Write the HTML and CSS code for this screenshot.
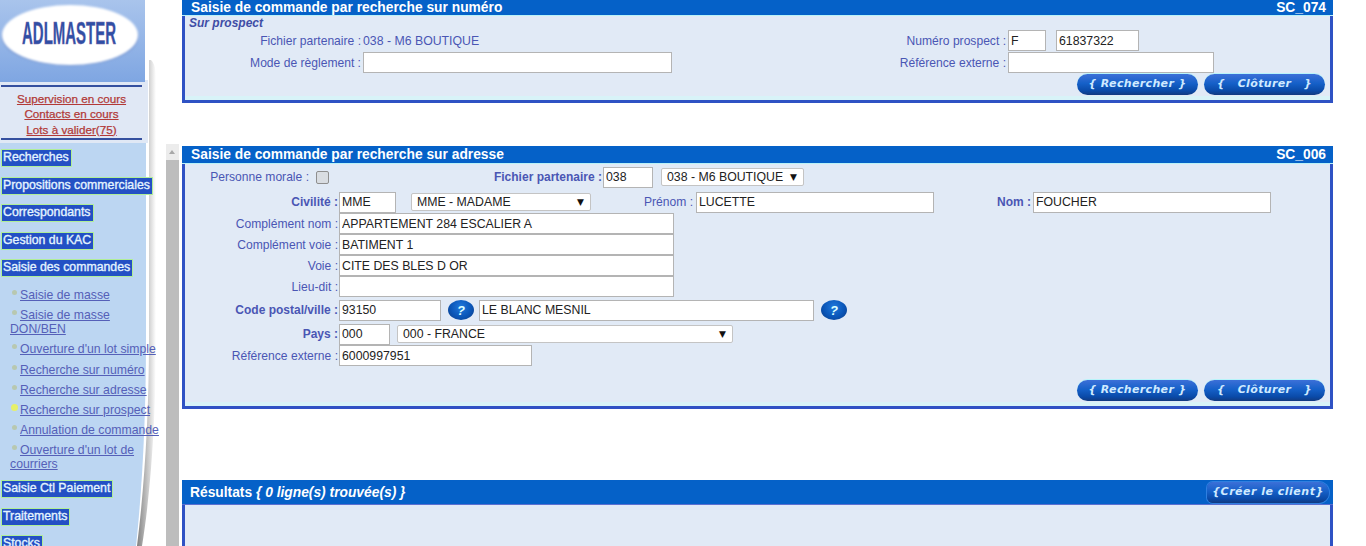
FILE: index.html
```html
<!DOCTYPE html>
<html lang="fr">
<head>
<meta charset="utf-8">
<title>ADLMASTER</title>
<link rel="stylesheet" href="styles.css">
</head>
<body>
<div class="app">
  <aside class="sidebar">
    <svg class="sidebar-art" width="166" height="546" viewBox="0 0 166 546">
      <defs>
        <linearGradient id="top" x1="0" y1="0" x2="0" y2="1"><stop offset="0" stop-color="#a9c4ec"/><stop offset="1" stop-color="#7fa6e2"/></linearGradient>
        <linearGradient id="shade" x1="0" y1="0" x2="1" y2="0"><stop offset="0" stop-color="#808080"/><stop offset="1" stop-color="#ffffff"/></linearGradient>
        <filter id="soft"><feGaussianBlur stdDeviation="1.2"/></filter>
      </defs>
      <path d="M0 143H146V340C146 420 142 490 136 546H0Z" fill="#bcd6f2"/>
      <path d="M0 80H148V143H0Z" fill="#e0e8f5"/>
      <path d="M149 60H151C155 64 156 70 156 80V330C156 420 151 490 142 546H137C144 490 149 420 149 340Z" fill="url(#shade)"/>
      <path d="M0 0H145V82H0Z" fill="url(#top)"/>
      <ellipse cx="70" cy="38" rx="68" ry="28" fill="#7f9fd8" filter="url(#soft)"/>
      <ellipse cx="70" cy="35" rx="68" ry="30" fill="#ffffff" filter="url(#soft)"/>
      <text x="69" y="44" text-anchor="middle" textLength="94" lengthAdjust="spacingAndGlyphs" class="logo-text">ADLMASTER</text>
    </svg>
    <div class="logo-space"></div>
    <div class="quick">
      <a href="#">Supervision en cours</a>
      <a href="#">Contacts en cours</a>
      <a href="#">Lots à valider(75)</a>
    </div>
    <nav class="menu">
      <a class="head" href="#">Recherches</a>
      <a class="head" href="#">Propositions commerciales</a>
      <a class="head" href="#">Correspondants</a>
      <a class="head" href="#">Gestion du KAC</a>
      <a class="head" href="#">Saisie des commandes</a>
      <ul class="sub">
        <li><a href="#">Saisie de masse</a></li>
        <li><a href="#">Saisie de masse DON/BEN</a></li>
        <li><a href="#">Ouverture d'un lot simple</a></li>
        <li><a href="#">Recherche sur numéro</a></li>
        <li><a href="#">Recherche sur adresse</a></li>
        <li class="current"><a href="#">Recherche sur prospect</a></li>
        <li><a href="#">Annulation de commande</a></li>
        <li><a href="#">Ouverture d'un lot de courriers</a></li>
      </ul>
      <a class="head" href="#">Saisie Ctl Paiement</a>
      <a class="head" href="#">Traitements</a>
      <a class="head" href="#">Stocks</a>
    </nav>
  </aside>
  <div class="scrollbar"><span class="scroll-up"></span><span class="scroll-thumb"></span></div>
  <main class="main">
    <section class="panel panel-one">
      <header class="panel-head"><span>Saisie de commande par recherche sur numéro</span><span>SC_074</span></header>
      <div class="panel-body">
        <div class="subtitle">Sur prospect</div>
        <div class="line-one">
          <label class="lab">Fichier partenaire :</label><span class="value">038 - M6 BOUTIQUE</span>
          <label class="lab">Numéro prospect :</label>
          <span class="pair"><input class="w38" value="F"><input class="w83 gap10" value="61837322"></span>
        </div>
        <div class="line-one line-two">
          <label class="lab">Mode de règlement :</label><input class="w309">
          <label class="lab">Référence externe :</label><input class="w206">
        </div>
        <div class="actions actions-one">
          <button class="pill">{ Rechercher }</button>
          <button class="pill wide">{ &nbsp; Clôturer &nbsp; }</button>
        </div>
      </div>
    </section>

    <section class="panel panel-two">
      <header class="panel-head"><span>Saisie de commande par recherche sur adresse</span><span>SC_006</span></header>
      <div class="panel-body">
        <div class="row row-morale">
          <label class="lab lab-morale">Personne morale :</label>
          <span class="check"></span>
          <label class="lab strong lab-fichier">Fichier partenaire :</label>
          <input class="w50" value="038">
          <span class="select w143 gap8"><span>038 - M6 BOUTIQUE</span><i>▼</i></span>
        </div>
        <div class="row row-civ">
          <label class="lab strong col">Civilité :</label>
          <input class="w57" value="MME">
          <span class="select w180 gap15"><span>MME - MADAME</span><i>▼</i></span>
          <label class="lab lab-prenom">Prénom :</label>
          <input class="w238" value="LUCETTE">
          <label class="lab strong lab-nom">Nom :</label>
          <input class="w238" value="FOUCHER">
        </div>
        <div class="row"><label class="lab col">Complément nom :</label><input class="w335" value="APPARTEMENT 284 ESCALIER A"></div>
        <div class="row"><label class="lab col">Complément voie :</label><input class="w335" value="BATIMENT 1"></div>
        <div class="row"><label class="lab col">Voie :</label><input class="w335" value="CITE DES BLES D OR"></div>
        <div class="row"><label class="lab col">Lieu-dit :</label><input class="w335"></div>
        <div class="row row-cp">
          <label class="lab strong col">Code postal/ville :</label>
          <input class="w102" value="93150">
          <button class="help">?</button>
          <input class="w335b" value="LE BLANC MESNIL">
          <button class="help">?</button>
        </div>
        <div class="row row-pays">
          <label class="lab strong col">Pays :</label>
          <input class="w51" value="000">
          <span class="select w336 gap7"><span>000 - FRANCE</span><i>▼</i></span>
        </div>
        <div class="row"><label class="lab col">Référence externe :</label><input class="w193" value="6000997951"></div>
        <div class="actions actions-two">
          <button class="pill">{ Rechercher }</button>
          <button class="pill wide">{ &nbsp; Clôturer &nbsp; }</button>
        </div>
      </div>
    </section>

    <section class="panel panel-three">
      <header class="panel-head head-results">
        <span>Résultats <em>{ 0 ligne(s) trouvée(s) }</em></span>
        <button class="pill create">{Créer le client}</button>
      </header>
      <div class="panel-body"></div>
    </section>
  </main>
</div>
</body>
</html>
```
FILE: styles.css
```css
* { box-sizing: border-box; }
html, body { margin: 0; height: 546px; overflow: hidden; background: #fff; }
body { font: 12.3px "Liberation Sans", Arial, sans-serif; color: #4a56b4; }
.app { display: flex; height: 546px; overflow: hidden; }

/* sidebar */
.sidebar { position: relative; width: 166px; flex: none; height: 546px; }
.sidebar-art { position: absolute; left: 0; top: 0; }
.logo-text { font: bold 32px "Liberation Sans", Arial, sans-serif; fill: #2f4fa6; stroke: #7a6aa8; stroke-width: .5px; }
.logo-space { height: 85px; }
.quick {
  position: relative; width: 141px; height: 55px; margin-left: 1px;
  border-top: 2px solid #35509f; border-bottom: 2px solid #35509f;
  display: flex; flex-direction: column; align-items: center; justify-content: center; gap: 1.5px;
  font-size: 11.7px; line-height: 14px; padding-top: 3px;
}
.quick a { color: #b23a38; -webkit-text-stroke: .25px #b23a38; }
.menu { position: relative; padding-top: 9px; white-space: nowrap; }
.head {
  display: table; height: 18px; line-height: 14px; padding: 0 2px 0 1px; margin: 0 0 9.5px 1px;
  background: #2350c4; border: 1px solid #b0ee98;
  color: #e4f4ff; font-size: 12.3px; -webkit-text-stroke: .35px #e4f4ff; text-decoration: none;
}
.sub { list-style: none; margin: 0 0 9px; padding: 0; white-space: normal; width: 150px; font-size: 12.25px; }
.sub li { padding-left: 10px; margin-bottom: 6.2px; line-height: 14px; text-indent: 10px; position: relative; }
.sub li:first-child { margin-top: 11px; }
.sub li::before { content: ""; position: absolute; left: 12px; top: 2px; width: 5px; height: 5px; border-radius: 50%; background: #b8c8b0; filter: blur(.5px); }
.sub li.current::before { background: #e6f06a; left: 11px; width: 7px; height: 7px; top: 1px; }
.sub a { color: #5560b8; }
.sub li:nth-child(3) a, .sub li:nth-child(6) a, .sub li:nth-child(7) a { white-space: nowrap; }

.scrollbar { width: 13px; flex: none; margin-top: 144px; display: flex; flex-direction: column; }
.scroll-up { height: 16px; background: #ececec; position: relative; }
.scroll-up::after { content: ""; position: absolute; left: 3px; top: 6px; border: 3.5px solid transparent; border-top: 0; border-bottom: 4px solid #a8a8a8; }
.scroll-thumb { flex: 1; background: #bdbdbd; }

/* main */
.main { width: 1151px; margin-left: 3px; flex: none; }
.panel { border: solid #2f52c4; border-width: 0 3px 3px; background: #e1eaf6; display: flex; flex-direction: column; }
.panel-one { height: 103px; margin-bottom: 43px; }
.panel-two { height: 263px; margin-bottom: 71px; }
.panel-three { height: 120px; border-bottom: 0; }
.panel-head {
  flex: none; height: 16px; margin: 0 -3px; padding: 0 7px 0 9px;
  display: flex; justify-content: space-between; align-items: center;
  background: #0561c8; color: #fff; font-weight: bold; font-size: 13.8px;
  border-bottom: 1px solid #b9f2f8;
}
.panel-two .panel-head { height: 18px; }
.head-results { height: 25px; padding: 0 4px 0 8px; border-bottom: 1px solid #5a6fd0; }
.panel-body { flex: 1; position: relative; box-shadow: inset 0 -4px 0 #d8f3f8; }
.subtitle { font-weight: bold; font-style: italic; font-size: 12px; color: #3f4ea6; padding: 0 0 0 4px; height: 14px; line-height: 14px; }
.lab { display: block; text-align: right; white-space: nowrap; padding-right: 1px; font-size: 12.1px; }
.line-one .lab { padding-right: 2px; }
.strong { font-weight: bold; font-size: 12px; }
input {
  display: block; height: 21px; padding: 0 2px; margin: 0; background: #fff;
  border: 1px solid #b4b4b4; border-radius: 0; outline: 0; flex: none;
  font: 12.3px "Liberation Sans", Arial, sans-serif; color: #222;
}

.line-one { display: grid; grid-template-columns: 178px 309px 336px auto; align-items: center; height: 21px; }
.line-two { margin-top: 1px; }
.pair { display: flex; }
.w38 { width: 38px; } .w83 { width: 83px; } .gap10 { margin-left: 10px; }
.w309 { width: 309px; } .w206 { width: 206px; }

.row { display: flex; align-items: center; height: 21px; }
.col { width: 154px; }
.row-morale { height: 26px; margin-bottom: 1px; }
.row-civ { height: 22px; }
.row-cp { height: 26px; }
.row-pays { height: 22px; }
.lab-morale { width: 125px; }
.check { width: 13px; height: 13px; margin-left: 6px; flex: none; border: 1px solid #8f8f8f; border-radius: 2px; background: #d9dde2; }
.lab-fichier { width: 274px; }
.lab-prenom { width: 105px; padding-right: 3px; }
.lab-nom { width: 99px; padding-right: 2px; }
.w50 { width: 50px; } .w57 { width: 57px; } .w238 { width: 238px; }
.w335 { width: 335px; } .w102 { width: 102px; } .w335b { width: 335px; }
.w51 { width: 51px; } .w193 { width: 193px; }
.gap8 { margin-left: 8px; } .gap15 { margin-left: 15px; } .gap7 { margin-left: 7px; }
.select {
  flex: none; display: flex; justify-content: space-between; align-items: center;
  height: 18px; padding: 0 6px 0 5px; background: #fff; border: 1px solid #c4c4c4; border-radius: 2px;
  font-size: 12.3px; color: #222;
}
.select i { font-style: normal; font-size: 9px; color: #111; font-family: "DejaVu Sans", sans-serif; }
.w143 { width: 143px; } .w180 { width: 180px; } .w336 { width: 336px; }
.help {
  width: 26px; height: 20px; margin: 0 5px 0 7px; padding: 0; border: 0; border-radius: 50%;
  background: radial-gradient(ellipse at 50% 35%, #1f78dc 0, #0a56b8 55%, #0c3a80 100%);
  color: #dff; font: italic bold 13px "Liberation Sans", sans-serif; flex: none;
}

.actions { display: flex; justify-content: flex-end; gap: 6px; padding-right: 5px; }
.actions-one { margin-top: 1px; }
.actions-two { margin-top: 14px; }
.pill {
  width: 121px; height: 21px; padding: 0 0 2px; border: 0; border-radius: 11px;
  background: linear-gradient(#3c70d8 0, #1560c8 45%, #0a4aa8 80%, #123a80 100%);
  box-shadow: 0 -1px 0 #b8f4fa;
  color: #cfeaff; font: italic bold 11px "DejaVu Sans", Verdana, sans-serif; letter-spacing: .35px; white-space: pre;
}
.create { height: 21px; width: 122px; letter-spacing: .5px; box-shadow: 0 0 0 1px #2f7fe0; border-radius: 6px 11px 11px 6px; }
```
